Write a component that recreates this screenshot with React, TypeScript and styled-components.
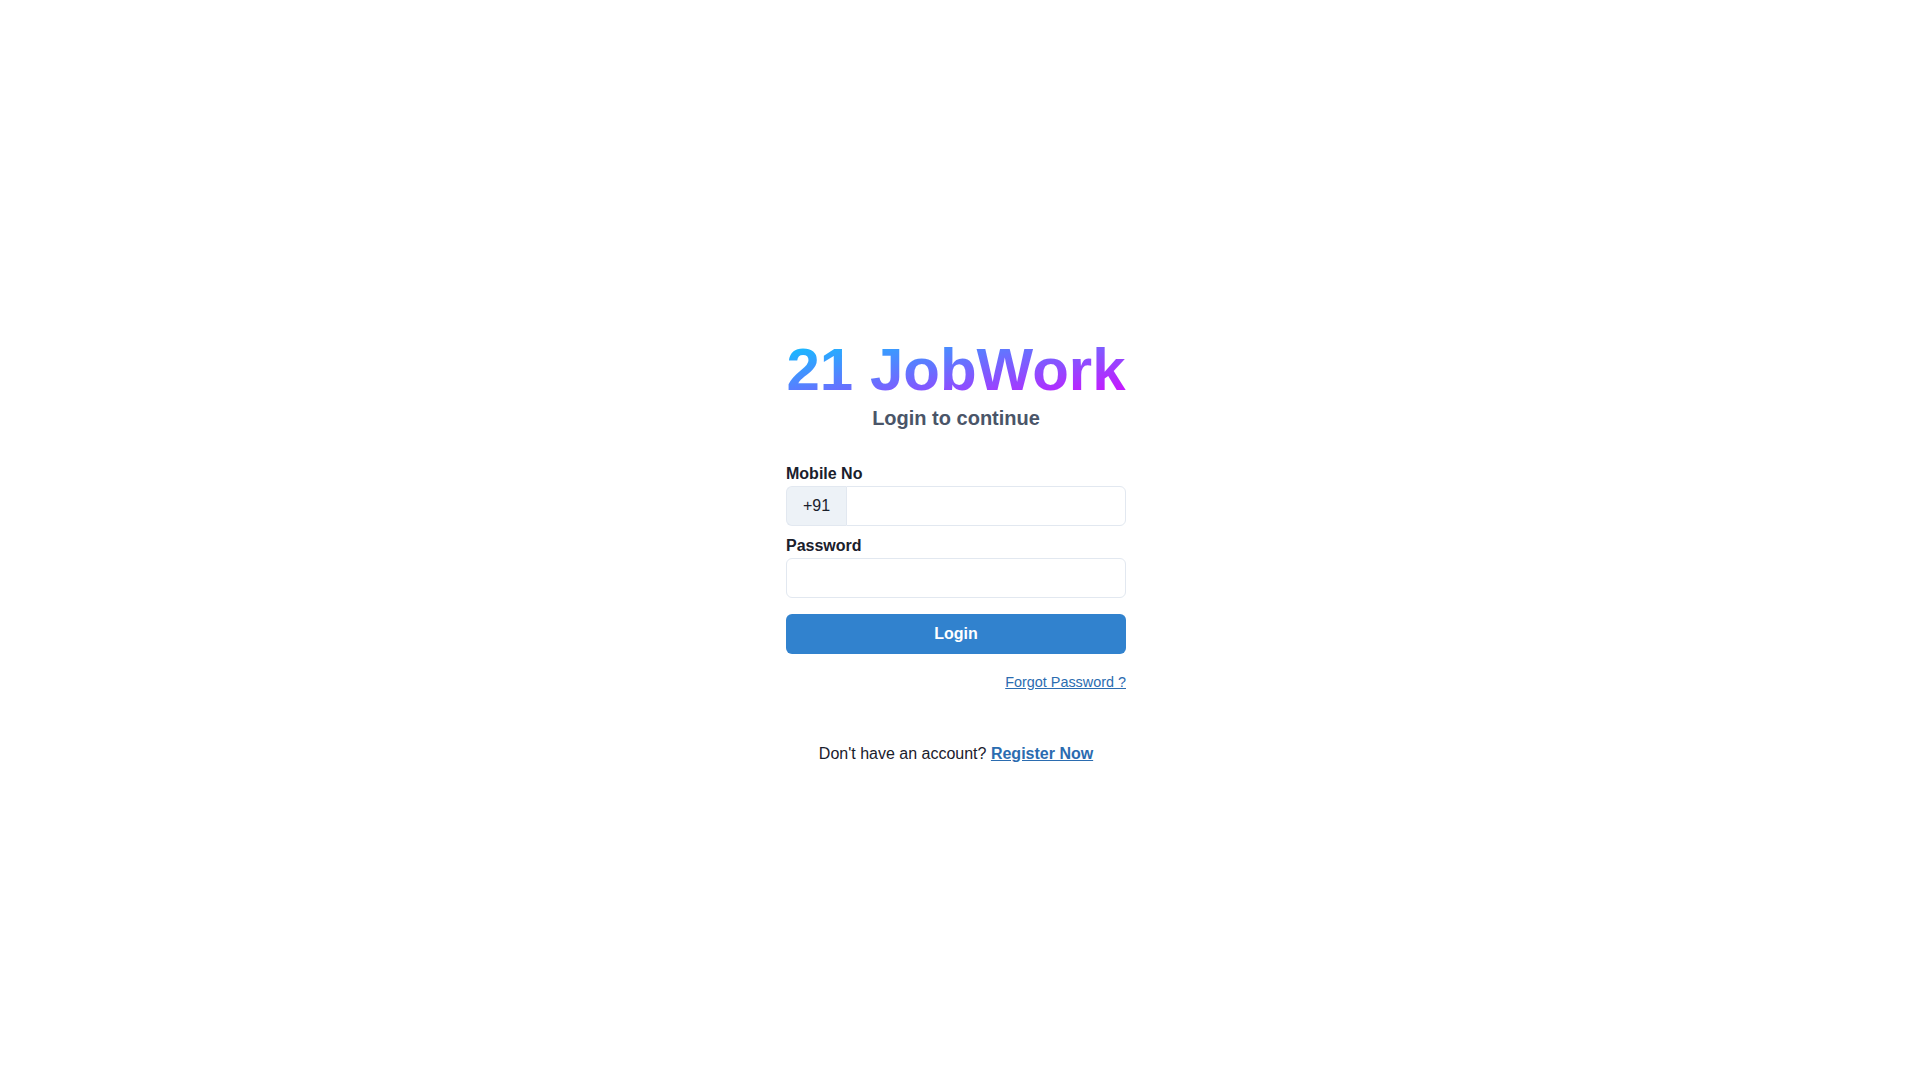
import React from "react";
import styled, { createGlobalStyle } from "styled-components";

const GlobalStyle = createGlobalStyle`
  html, body {
    background: #ffffff;
  }
  body {
    margin: 8px;
    font-family: "Liberation Sans", Arial, sans-serif;
    color: #1a202c;
  }
  *, *::before, *::after { box-sizing: border-box; }
  ::-webkit-scrollbar {
    width: 10px;
    background: #ffffff;
  }
  ::-webkit-scrollbar-track {
    background: #ffffff;
  }
  ::-webkit-scrollbar-thumb {
    background: #111111;
    border: 2px solid #ffffff;
    border-radius: 5px;
  }
`;

const Page = styled.div`
  min-height: 100vh;
  display: flex;
  align-items: center;
  justify-content: center;
  padding: 4px 8px 0 0;
`;

const Card = styled.div`
  width: 340px;
  display: flex;
  flex-direction: column;
`;

const Header = styled.div`
  display: flex;
  flex-direction: column;
  align-items: center;
  margin-bottom: 32px;
`;

const Title = styled.h1`
  margin: 0;
  width: 100%;
  text-align: center;
  font-size: 60px;
  line-height: 72px;
  font-weight: 700;
  background: linear-gradient(to bottom right, #00d0ff, #e100ff);
  -webkit-background-clip: text;
  background-clip: text;
  color: transparent;
  white-space: nowrap;
`;

const Subtitle = styled.p`
  margin: 0;
  font-size: 20px;
  line-height: 24px;
  font-weight: 700;
  color: #4a5568;
`;

const Form = styled.form`
  display: flex;
  flex-direction: column;
`;

const Field = styled.div<{ $gap?: number }>`
  display: flex;
  flex-direction: column;
  margin-bottom: ${(p) => p.$gap ?? 8}px;
`;

const Label = styled.label`
  font-size: 16px;
  line-height: 24px;
  font-weight: 700;
  color: #1a202c;
`;

const InputGroup = styled.div`
  display: flex;
  height: 40px;
`;

const Addon = styled.span`
  display: flex;
  align-items: center;
  justify-content: center;
  flex: 0 0 60px;
  background: #edf2f7;
  border: 1px solid #e2e8f0;
  border-right: none;
  border-radius: 6px 0 0 6px;
  font-size: 16px;
  color: #1a202c;
`;

const Input = styled.input<{ $attached?: boolean }>`
  display: block;
  width: 100%;
  min-width: 0;
  height: 40px;
  flex: none;
  padding: 0 16px;
  border: 1px solid #e2e8f0;
  border-radius: ${(p) => (p.$attached ? "0 6px 6px 0" : "6px")};
  font-family: inherit;
  font-size: 16px;
  color: #1a202c;
  background: #ffffff;
  outline: none;
`;

const GroupInput = styled(Input)`
  flex: 1 1 auto;
  width: auto;
`;

const Button = styled.button`
  height: 40px;
  width: 100%;
  border: none;
  border-radius: 6px;
  background: #3182ce;
  color: #ffffff;
  font-family: inherit;
  font-size: 16px;
  font-weight: 700;
  cursor: pointer;
`;

const ForgotRow = styled.div`
  display: flex;
  justify-content: flex-end;
  margin-top: 18px;
`;

const SmallLink = styled.a`
  font-size: 14.4px;
  line-height: 20px;
  color: #2b6cb0;
  text-decoration: underline;
  cursor: pointer;
`;

const Footer = styled.p`
  margin: 50px 0 0;
  text-align: center;
  font-size: 16px;
  line-height: 24px;
  color: #1a202c;
`;

const StrongLink = styled.a`
  font-weight: 700;
  color: #2b6cb0;
  text-decoration: underline;
  cursor: pointer;
`;

export default function App() {
  return (
    <>
      <GlobalStyle />
      <Page>
        <Card>
          <Header>
            <Title>21 JobWork</Title>
            <Subtitle>Login to continue</Subtitle>
          </Header>
          <Form onSubmit={(e) => e.preventDefault()}>
            <Field>
              <Label htmlFor="mobile">Mobile No</Label>
              <InputGroup>
                <Addon>+91</Addon>
                <GroupInput id="mobile" type="tel" $attached />
              </InputGroup>
            </Field>
            <Field $gap={16}>
              <Label htmlFor="password">Password</Label>
              <Input id="password" type="password" />
            </Field>
            <Button type="submit">Login</Button>
          </Form>
          <ForgotRow>
            <SmallLink>Forgot Password ?</SmallLink>
          </ForgotRow>
          <Footer>
            Don't have an account? <StrongLink>Register Now</StrongLink>
          </Footer>
        </Card>
      </Page>
    </>
  );
}
